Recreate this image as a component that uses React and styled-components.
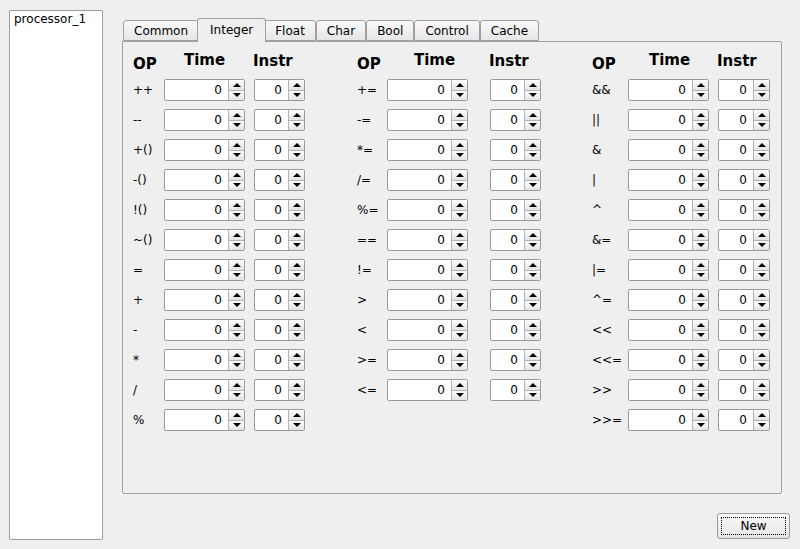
import React from "react";
import styled, { createGlobalStyle } from "styled-components";

const Global = createGlobalStyle`
  html, body { margin: 0; padding: 0; background: #efefef; }
  body { font-family: "DejaVu Sans", "Noto Sans", sans-serif; font-size: 12px; color: #000; }
  * { box-sizing: border-box; }
`;

const Window = styled.div`
  width: 800px;
  height: 549px;
  display: flex;
  align-items: flex-start;
  padding: 10px 0 0 9px;
  background: #efefef;
`;

const List = styled.div`
  width: 94px;
  height: 530px;
  background: #fff;
  border: 1px solid #9c9c9c;
  border-radius: 2px;
  padding: 1px 4px;
  line-height: 14px;
`;

const Right = styled.div`
  width: 668px;
  margin-left: 19px;
  padding-top: 8px;
  display: flex;
  flex-direction: column;
`;

const TabWidget = styled.div`
  width: 660px;
  display: flex;
  flex-direction: column;
`;

const TabBar = styled.div`
  display: flex;
  align-items: flex-end;
  height: 24px;
  margin-bottom: -1px;
  padding-left: 1px;
  position: relative;
  z-index: 1;
`;

const Tab = styled.div`
  height: ${(p) => (p.$active ? "24px" : "21px")};
  margin: ${(p) => (p.$active ? "0 -2px 0 -2px" : "0 0 1px 0")};
  padding: ${(p) => (p.$active ? "4px 12px 0" : "3px 10px 0")};
  border: 1px solid #a0a0a0;
  border-bottom: ${(p) => (p.$active ? "none" : "1px solid #a0a0a0")};
  border-radius: 3px 3px 0 0;
  background: ${(p) =>
    p.$active ? "#efefef" : "linear-gradient(#f9f9f9, #e6e6e6)"};
  position: relative;
  z-index: ${(p) => (p.$active ? 2 : 1)};
  line-height: 15px;
  white-space: nowrap;
`;

const Panel = styled.div`
  height: 453px;
  border: 1px solid #a0a0a0;
  border-radius: 0 2px 2px 2px;
  padding: 9px 0 0 10px;
  display: flex;
  align-items: flex-start;
`;

const Group = styled.div`
  display: grid;
  grid-template-columns: ${(p) => p.$cols};
  grid-template-rows: 20px;
  grid-auto-rows: 22px;
  row-gap: 8px;
  margin-right: ${(p) => p.$gapAfter}px;
`;

const Head = styled.div`
  font-weight: bold;
  font-size: 15px;
  line-height: 18px;
  padding-top: ${(p) => p.$top || 0}px;
  padding-left: ${(p) => p.$shift || 0}px;
  margin-left: ${(p) => p.$ml || 0}px;
  text-align: ${(p) => p.$align || "left"};
  white-space: nowrap;
`;

const OpLabel = styled.div`
  display: flex;
  align-items: center;
  white-space: nowrap;
  color: #000;
`;

const Spin = styled.div`
  display: flex;
  height: 22px;
  background: #fff;
  border: 1px solid #9a9a9a;
  border-radius: 2px;
  overflow: hidden;
`;

const Field = styled.div`
  flex: 1;
  text-align: right;
  padding-right: 6px;
  line-height: 20px;
`;

const BtnCol = styled.div`
  width: 16px;
  display: flex;
  flex-direction: column;
  border-left: 1px solid #b4b4b4;
`;

const Btn = styled.div`
  flex: 1;
  display: flex;
  align-items: center;
  justify-content: center;
  background: linear-gradient(#fdfdfd, #e4e4e4);
  border-top: ${(p) => (p.$down ? "1px solid #b4b4b4" : "none")};
`;

const Arrow = styled.div`
  width: 0;
  height: 0;
  border-left: 4px solid transparent;
  border-right: 4px solid transparent;
  ${(p) =>
    p.$down ? "border-top: 4px solid #000;" : "border-bottom: 4px solid #000;"}
`;

const Footer = styled.div`
  display: flex;
  justify-content: flex-end;
  margin-top: 19px;
`;

const Button = styled.div`
  width: 73px;
  height: 26px;
  border: 1px solid #9a9a9a;
  border-radius: 3px;
  background: linear-gradient(#fafafa, #e4e4e4);
  padding: 3px;
`;

const Focus = styled.div`
  height: 100%;
  border: 1px dotted #000;
  display: flex;
  align-items: center;
  justify-content: center;
  font-size: 12px;
`;

const SpinBox = () => (
  <Spin>
    <Field>0</Field>
    <BtnCol>
      <Btn>
        <Arrow />
      </Btn>
      <Btn $down>
        <Arrow $down />
      </Btn>
    </BtnCol>
  </Spin>
);

const groups = [
  {
    cols: "31px 81px 51px",
    colGap: 9,
    gapAfter: 52,
    timeShift: 0,
    ops: ["++", "--", "+()", "-()", "!()", "~()", "=", "+", "-", "*", "/", "%"],
  },
  {
    cols: "30px 81px 51px",
    colGap: 22,
    gapAfter: 51,
    timeShift: 14,
    ops: ["+=", "-=", "*=", "/=", "%=", "==", "!=", ">", "<", ">=", "<="],
  },
  {
    cols: "36px 81px 52px",
    colGap: 9,
    gapAfter: 0,
    timeShift: 2,
    ops: ["&&", "||", "&", "|", "^", "&=", "|=", "^=", "<<", "<<=", ">>", ">>="],
  },
];

const tabs = ["Common", "Integer", "Float", "Char", "Bool", "Control", "Cache"];

export default function App() {
  return (
    <>
      <Global />
      <Window>
        <List>processor_1</List>
        <Right>
          <TabWidget>
            <TabBar>
              {tabs.map((t) => (
                <Tab key={t} $active={t === "Integer"}>
                  {t}
                </Tab>
              ))}
            </TabBar>
            <Panel>
              {groups.map((g, gi) => {
                const [a, b, c] = g.cols.split(" ");
                const cols = `${a} ${b} ${g.colGap}px ${c}`;
                return (
                  <Group key={gi} $cols={cols} $gapAfter={g.gapAfter}>
                    <Head $top={4}>OP</Head>
                    <Head $align="center" $shift={g.timeShift}>
                      Time
                    </Head>
                    <div />
                    <Head $top={1} $ml={-1}>
                      Instr
                    </Head>
                    {g.ops.map((op) => (
                      <React.Fragment key={op}>
                        <OpLabel>{op}</OpLabel>
                        <SpinBox />
                        <div />
                        <SpinBox />
                      </React.Fragment>
                    ))}
                  </Group>
                );
              })}
            </Panel>
          </TabWidget>
          <Footer>
            <Button>
              <Focus>New</Focus>
            </Button>
          </Footer>
        </Right>
      </Window>
    </>
  );
}
